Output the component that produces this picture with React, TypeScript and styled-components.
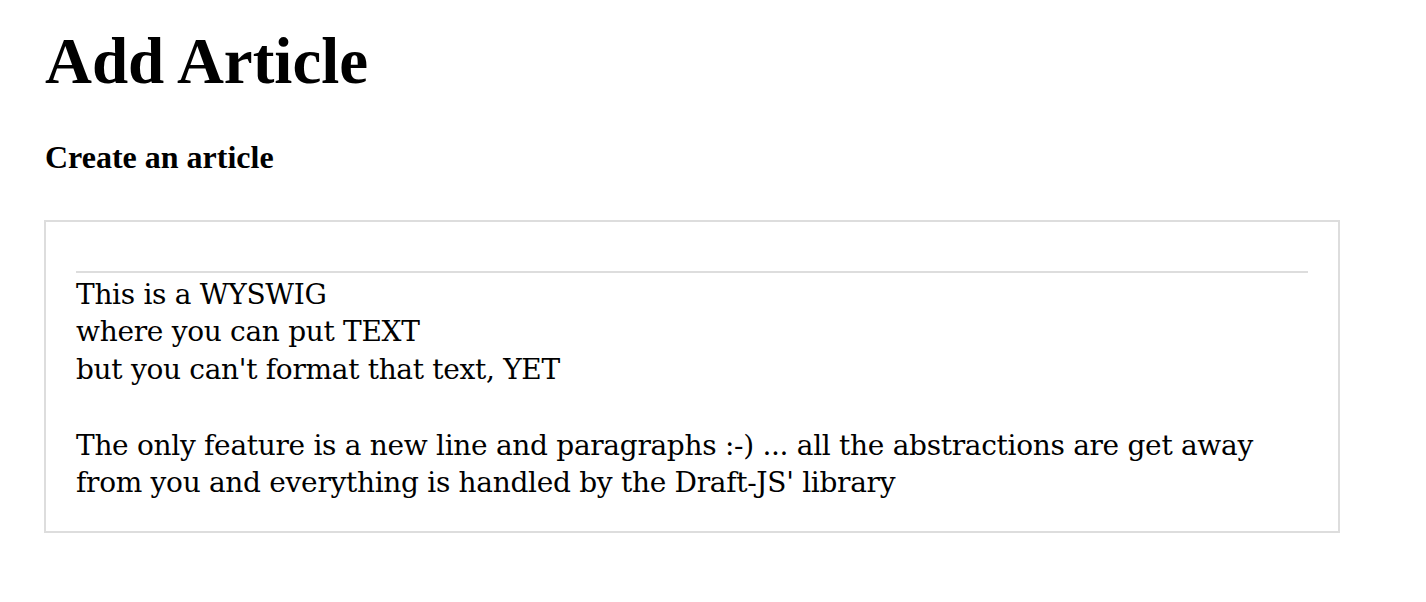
import React from "react";
import styled, { createGlobalStyle } from "styled-components";

const Global = createGlobalStyle`
  html, body { margin: 0; padding: 0; background: #fff; }
  body { font-family: "Liberation Serif", serif; color: #000; }
`;

const Page = styled.div`
  padding: 23px 86px 0 44px;
`;

const Title = styled.h1`
  font-family: "Liberation Serif", serif;
  font-weight: 700;
  font-size: 65px;
  line-height: 76px;
  margin: 0 0 0 1px;
`;

const Subtitle = styled.h3`
  font-family: "Liberation Serif", serif;
  font-weight: 700;
  font-size: 32px;
  line-height: 36px;
  margin: 40px 0 0 1px;
`;

const EditorBox = styled.div`
  margin-top: 45px;
  border: 2px solid #ddd;
  padding: 49px 30px 29px 30px;
`;

const Toolbar = styled.div`
  border-top: 2px solid #ddd;
`;

const Content = styled.div`
  font-family: "DejaVu Serif", serif;
  font-size: 28px;
  letter-spacing: -0.3px;
  line-height: 37.75px;
  padding-top: 2.5px;
`;

const Line = styled.div`
  min-height: 37.75px;
`;

const lines = [
  "This is a WYSWIG",
  "where you can put TEXT",
  "but you can't format that text, YET",
  "",
  "The only feature is a new line and paragraphs :-) ... all the abstractions are get away from you and everything is handled by the Draft-JS' library",
];

export default function App() {
  return (
    <>
      <Global />
      <Page>
        <Title>Add Article</Title>
        <Subtitle>Create an article</Subtitle>
        <EditorBox>
          <Toolbar />
          <Content>
            {lines.map((l, i) => (
              <Line key={i}>{l}</Line>
            ))}
          </Content>
        </EditorBox>
      </Page>
    </>
  );
}
